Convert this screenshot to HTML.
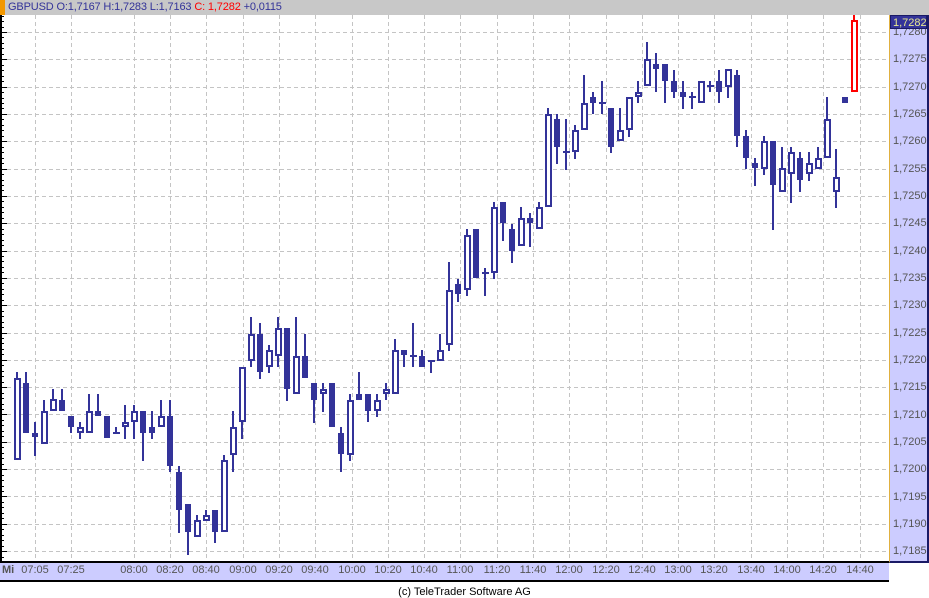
<!DOCTYPE html>
<html><head><meta charset="utf-8"><style>
*{margin:0;padding:0;box-sizing:border-box}
body{width:929px;height:598px;background:#fff;position:relative;overflow:hidden;font-family:"Liberation Sans",Arial,sans-serif;font-size:11px}
#hdr{position:absolute;left:0;top:0;width:929px;height:15px;background:#c8c8c8}
#hdr .o{position:absolute;left:0;top:0;width:5px;height:15px;background:#f39800}
#hdr .t{position:absolute;left:8px;top:1px;color:#333399;white-space:pre;font-size:11px;line-height:13px;letter-spacing:-0.15px}
.r{color:#ff0000}
#raxis{position:absolute;left:889px;top:15px;width:40px;height:548px;background:#ccccff;border-left:1px solid #e0b040;border-right:2px solid #1a1a66;border-bottom:2px solid #1a1a66}
.yl{position:absolute;left:893px;color:#555;font-size:11px;line-height:12px}
#cur{position:absolute;left:890px;top:15px;width:37px;height:14px;background:#333399;color:#e8e890;font-size:11px;line-height:14px;padding-left:2px;border:1px solid #1a1a66}
#baxis{position:absolute;left:0;top:561px;width:889px;height:21px;background:#ccccff;border-top:2px solid #000;border-bottom:2px solid #000}
.xl{position:absolute;top:564px;color:#555;font-size:11px;line-height:12px;transform:translateX(-50%)}
#copy{position:absolute;left:0;width:929px;top:586px;text-align:center;font-size:11px;color:#000}
</style></head><body>
<div id="hdr"><div class="o"></div><div class="t">GBPUSD O:1,7167 H:1,7283 L:1,7163 <span class="r">C: 1,7282</span> +0,0115</div></div>
<svg id="ch" width="889" height="546" style="position:absolute;left:0;top:15px" viewBox="0 15 889 546"></svg>
<div id="raxis"></div>
<div class="yl" style="top:26px">1,7280</div>
<div class="yl" style="top:53px">1,7275</div>
<div class="yl" style="top:81px">1,7270</div>
<div class="yl" style="top:108px">1,7265</div>
<div class="yl" style="top:135px">1,7260</div>
<div class="yl" style="top:163px">1,7255</div>
<div class="yl" style="top:190px">1,7250</div>
<div class="yl" style="top:217px">1,7245</div>
<div class="yl" style="top:245px">1,7240</div>
<div class="yl" style="top:272px">1,7235</div>
<div class="yl" style="top:299px">1,7230</div>
<div class="yl" style="top:327px">1,7225</div>
<div class="yl" style="top:354px">1,7220</div>
<div class="yl" style="top:381px">1,7215</div>
<div class="yl" style="top:409px">1,7210</div>
<div class="yl" style="top:436px">1,7205</div>
<div class="yl" style="top:463px">1,7200</div>
<div class="yl" style="top:491px">1,7195</div>
<div class="yl" style="top:518px">1,7190</div>
<div class="yl" style="top:545px">1,7185</div>
<div id="cur">1,7282</div>
<div id="baxis"></div>
<div class="xl" style="left:2px;transform:none;font-weight:bold">Mi</div>
<div class="xl" style="left:35px">07:05</div>
<div class="xl" style="left:71px">07:25</div>
<div class="xl" style="left:134px">08:00</div>
<div class="xl" style="left:170px">08:20</div>
<div class="xl" style="left:206px">08:40</div>
<div class="xl" style="left:243px">09:00</div>
<div class="xl" style="left:279px">09:20</div>
<div class="xl" style="left:315px">09:40</div>
<div class="xl" style="left:352px">10:00</div>
<div class="xl" style="left:388px">10:20</div>
<div class="xl" style="left:424px">10:40</div>
<div class="xl" style="left:460px">11:00</div>
<div class="xl" style="left:497px">11:20</div>
<div class="xl" style="left:533px">11:40</div>
<div class="xl" style="left:569px">12:00</div>
<div class="xl" style="left:606px">12:20</div>
<div class="xl" style="left:642px">12:40</div>
<div class="xl" style="left:678px">13:00</div>
<div class="xl" style="left:714px">13:20</div>
<div class="xl" style="left:751px">13:40</div>
<div class="xl" style="left:787px">14:00</div>
<div class="xl" style="left:823px">14:20</div>
<div class="xl" style="left:860px">14:40</div>
<div id="copy">(c) TeleTrader Software AG</div>
<script>
var s='';
var vx=[35,71,134,170,206,243,279,315,352,388,424,460,497,533,569,606,642,678,714,751,787,823,860];
vx.forEach(function(x){s+='<line x1="'+(x+.5)+'" y1="15" x2="'+(x+.5)+'" y2="561" stroke="#c4c4c4" stroke-dasharray="4,3"/>';});
for(var k=0;k<20;k++){var y=Math.round(32+k*27.32)+.5;s+='<line x1="0" y1="'+y+'" x2="889" y2="'+y+'" stroke="#c4c4c4" stroke-dasharray="4,3"/>';}
s+='<line x1="1" y1="15" x2="1" y2="561" stroke="#000" stroke-width="2"/>';
for(var k=-3;k<100;k++){var y=Math.round(32+k*5.464)+.5;if(y<16||y>560)continue;s+='<line x1="0" y1="'+y+'" x2="'+(k%5==0?7:4)+'" y2="'+y+'" stroke="#000"/>';}
var C=[[17,372,460,378,460,0],[26,372,433,383,433,1],[35,422,456,433,437,1],[44,400,444,411,444,0],[53,389,411,399,411,0],[62,389,411,400,411,1],[71,416,433,416,427,1],[80,422,439,427,433,0],[89,394,433,411,433,0],[98,394,416,411,416,1],[107,416,438,416,438,1],[116,427,433,432,433,1],[125,405,439,422,427,0],[134,405,439,411,422,0],[143,411,461,411,433,1],[152,411,439,427,433,1],[161,400,427,416,427,0],[170,400,472,416,466,1],[179,466,533,472,510,1],[188,504,555,504,532,1],[197,515,537,520,537,0],[206,510,521,515,521,0],[215,510,543,510,532,1],[224,455,532,460,532,0],[233,411,472,427,455,0],[242,367,439,367,422,0],[251,317,367,334,361,0],[260,323,379,334,372,1],[269,345,373,350,367,0],[278,317,367,328,356,0],[287,328,401,328,389,1],[296,317,394,356,394,0],[305,334,378,356,378,1],[314,383,423,383,400,1],[323,383,412,389,394,0],[332,383,427,383,427,1],[341,427,472,433,454,1],[350,394,461,400,455,0],[359,372,400,394,400,1],[368,394,422,394,411,1],[377,394,417,400,411,0],[386,383,400,389,394,0],[395,339,394,350,394,0],[404,350,367,350,355,1],[413,323,367,355,357,1],[422,350,367,356,367,1],[431,361,373,360,362,1],[440,334,361,350,361,0],[449,262,351,290,345,0],[458,279,302,284,294,1],[467,229,296,235,290,0],[476,229,278,229,278,1],[485,268,296,272,274,1],[494,202,279,207,273,0],[503,202,241,202,223,1],[512,224,263,229,251,1],[521,207,246,218,246,0],[530,213,247,218,223,1],[539,202,229,207,229,0],[548,108,207,114,207,0],[557,114,164,119,147,1],[566,119,170,151,153,1],[575,125,159,130,152,0],[584,75,130,103,130,0],[593,92,114,97,103,1],[602,81,114,102,104,1],[611,108,153,108,147,1],[620,108,141,130,141,0],[629,97,137,97,130,0],[638,81,103,92,97,0],[647,42,86,59,86,0],[656,53,92,64,69,1],[665,64,103,64,81,1],[674,70,98,81,92,1],[683,81,109,92,97,1],[692,92,109,96,98,1],[701,81,103,81,103,0],[710,81,92,85,87,1],[719,70,103,81,92,1],[728,69,98,69,87,0],[737,70,147,75,136,1],[746,130,169,136,158,1],[755,158,186,163,168,1],[764,136,175,141,169,0],[773,141,230,141,185,1],[782,147,192,168,192,0],[791,147,203,152,174,0],[800,152,192,158,180,1],[809,152,181,163,174,0],[818,147,169,158,169,0],[827,97,158,119,158,0],[836,149,208,177,192,0],[845,97,103,97,103,1]];
function cd(c,col){var x=c[0],wt=c[1],wb=c[2],bt=c[3],bb=c[4],f=c[5];
 var r='';
 if(wt<bt||wb>bb) r+='<rect x="'+(x-1)+'" y="'+wt+'" width="2" height="'+(wb-wt)+'" fill="'+col+'"/>';
 if(bb-bt<=2){r+='<rect x="'+(x-3)+'" y="'+bt+'" width="7" height="2" fill="'+col+'"/>';}
 else if(f){r+='<rect x="'+(x-3)+'" y="'+bt+'" width="6" height="'+(bb-bt)+'" fill="'+col+'"/>';}
 else{r+='<rect x="'+(x-2)+'" y="'+(bt+1)+'" width="5" height="'+(bb-bt-2)+'" fill="#fff" stroke="'+col+'" stroke-width="2"/>';}
 return r;}
C.forEach(function(c){s+=cd(c,'#333399');});
s+=cd([854,15,92,20,92,0],'#ff0000');
document.getElementById('ch').innerHTML=s;
</script>
</body></html>
